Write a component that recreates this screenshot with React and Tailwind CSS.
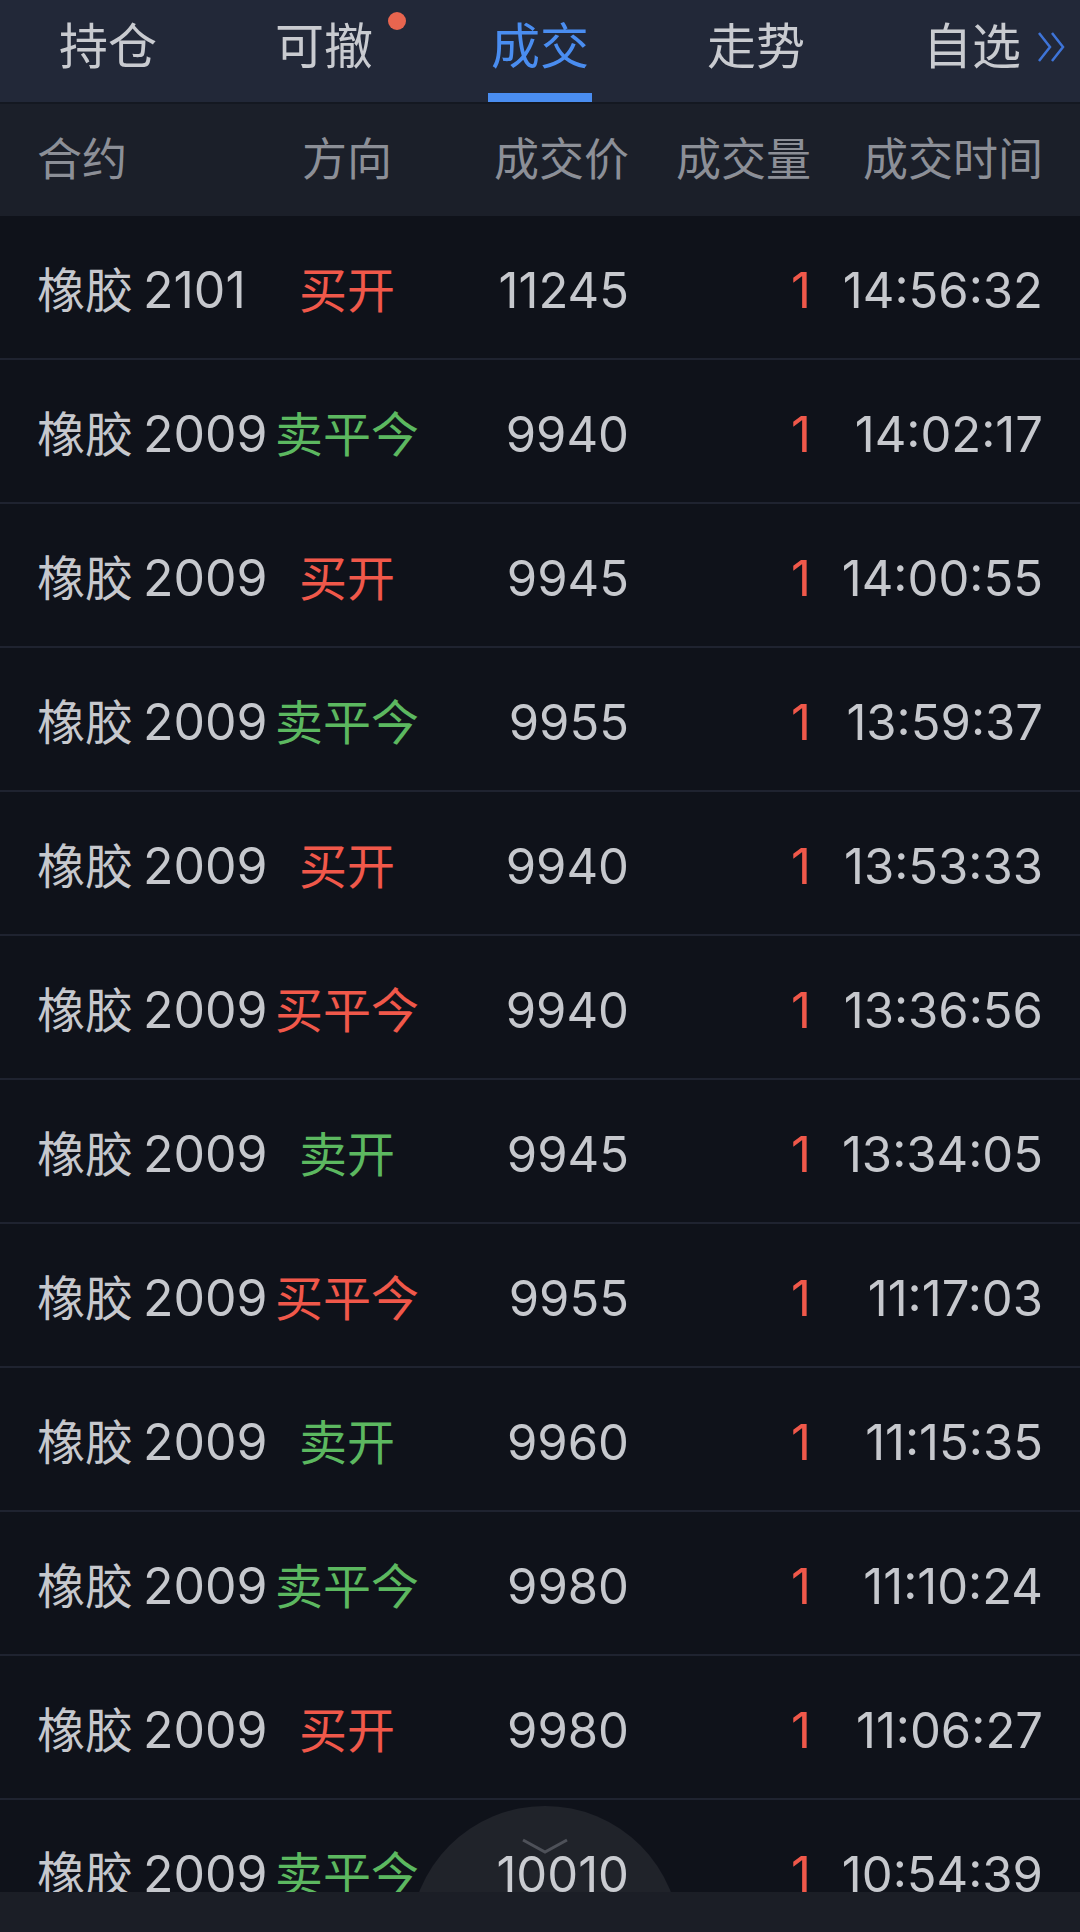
const tabs = ['持仓', '可撤', '成交', '走势', '自选'];

const trades = [
  { code: '2101', dir: '买开', price: '11245', qty: '1', time: '14:56:32' },
  { code: '2009', dir: '卖平今', price: '9940', qty: '1', time: '14:02:17' },
  { code: '2009', dir: '买开', price: '9945', qty: '1', time: '14:00:55' },
  { code: '2009', dir: '卖平今', price: '9955', qty: '1', time: '13:59:37' },
  { code: '2009', dir: '买开', price: '9940', qty: '1', time: '13:53:33' },
  { code: '2009', dir: '买平今', price: '9940', qty: '1', time: '13:36:56' },
  { code: '2009', dir: '卖开', price: '9945', qty: '1', time: '13:34:05' },
  { code: '2009', dir: '买平今', price: '9955', qty: '1', time: '11:17:03' },
  { code: '2009', dir: '卖开', price: '9960', qty: '1', time: '11:15:35' },
  { code: '2009', dir: '卖平今', price: '9980', qty: '1', time: '11:10:24' },
  { code: '2009', dir: '买开', price: '9980', qty: '1', time: '11:06:27' },
  { code: '2009', dir: '卖平今', price: '10010', qty: '1', time: '10:54:39' },
];

const font = { fontFamily: '"Inter", "Noto Sans CJK SC", sans-serif' };

export default function App() {
  return (
    <div className="h-[1932px] w-[1080px] flex flex-col bg-[#0f121a] overflow-hidden" style={font}>
      {/* tabs */}
      <div className="h-[104px] shrink-0 bg-[#222838] grid grid-cols-5 border-b-2 border-[#141821]">
        {tabs.map((t, i) => (
          <div key={t} className="relative flex items-center justify-center">
            <span className={`relative text-[49px] leading-none -mt-[10px] ${i === 2 ? 'text-[#4a8df0]' : 'text-[#c9cbd0]'}`}>
              {t}
              {i === 1 && <span className="absolute -right-[33px] -top-[10px] w-[18px] h-[18px] rounded-full bg-[#e8654f]" />}
            </span>
            {i === 2 && <div className="absolute bottom-0 left-1/2 -translate-x-1/2 w-[104px] h-[9px] bg-[#4a8df0]" />}
            {i === 4 && (
              <svg className="absolute right-[12px] top-[31px]" width="32" height="32" viewBox="0 0 32 32" fill="none" stroke="#3e74d8" strokeWidth="2.5">
                <path d="M3 2 L14 16 L3 30" />
                <path d="M16 2 L27 16 L16 30" />
              </svg>
            )}
          </div>
        ))}
      </div>

      {/* header */}
      <div className="h-[112px] shrink-0 bg-[#1b1f29] flex items-center px-[37px] text-[45px] text-[#8c8f97] whitespace-nowrap">
        <div className="w-[235px]">合约</div>
        <div className="w-[150px] text-center">方向</div>
        <div className="w-[207px] text-right">成交价</div>
        <div className="w-[182px] text-right">成交量</div>
        <div className="w-[232px] text-right">成交时间</div>
      </div>

      {/* rows */}
      <div className="relative flex-1 overflow-hidden">
        {trades.map((r, i) => (
          <div key={i} className="h-[144px] flex items-center pt-[7px] px-[37px] border-b-2 border-[#1f2330] text-[49px] text-[#c6c8cd] whitespace-nowrap">
            <div className="w-[235px] text-[48px]">橡胶<span className="ml-[10px] text-[50px]">{r.code}</span></div>
            <div className={`w-[150px] text-center text-[48px] ${r.dir.startsWith('买') ? 'text-[#f0584a]' : 'text-[#5cb860]'}`}>{r.dir}</div>
            <div className="w-[207px] text-right">{r.price}</div>
            <div className="w-[182px] text-right text-[#f0584a]">{r.qty}</div>
            <div className="w-[232px] text-right">{r.time}</div>
          </div>
        ))}
        <div className="absolute left-[410px] top-[1590px] w-[270px] h-[270px] rounded-full bg-[#ffffff]/[0.07] pointer-events-none flex justify-center">
          <svg className="mt-[32px]" width="48" height="16" viewBox="0 0 48 16" fill="none" stroke="#4e5159" strokeWidth="3">
            <path d="M2 2 L24 14 L46 2" />
          </svg>
        </div>
      </div>

      {/* bottom bar */}
      <div className="h-[40px] shrink-0 bg-[#1b1e26]" />
    </div>
  );
}
